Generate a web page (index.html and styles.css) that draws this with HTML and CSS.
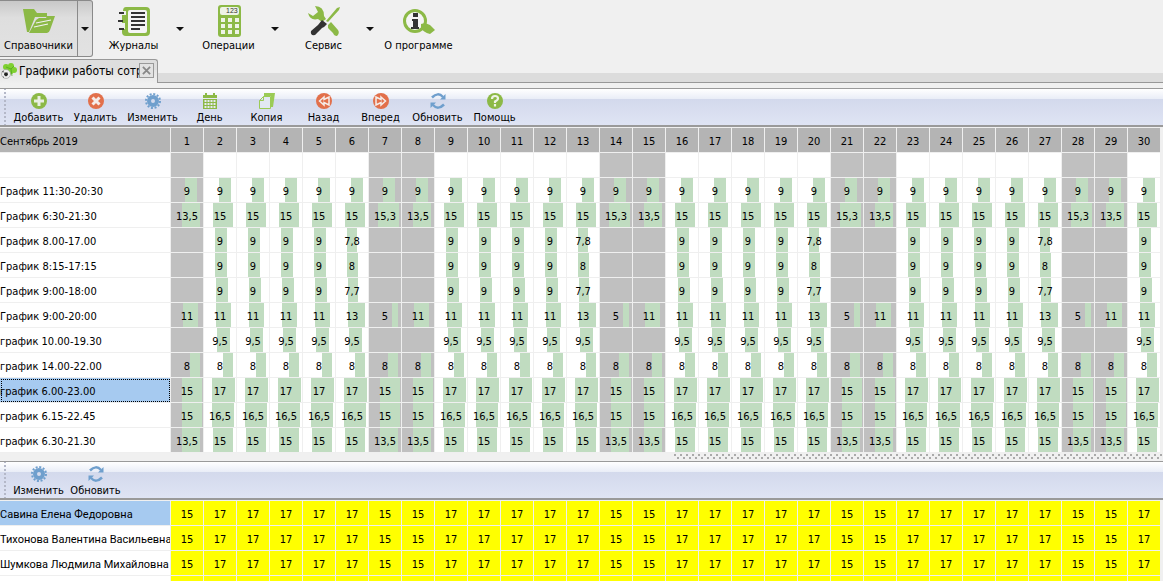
FILE: index.html
```html
<!DOCTYPE html>
<html lang="ru">
<head>
<meta charset="utf-8">
<title>Графики работы сотрудников</title>
<link rel="stylesheet" href="styles.css">
</head>
<body>
<svg class="sprite" aria-hidden="true">
  <symbol id="i-folder" viewBox="0 0 32 32"><path fill="#8cb946" d="M0 4h11l3 4h10v4H12L6 27H4z"/><path fill="#8cb946" d="M13 15l3-2h7l1-2h8l-5 14q-1 3-3 3H6z"/><path d="M13 18l15-3M11 22l14-3" stroke="#f2f2f2" stroke-width="1.200" fill="none"/></symbol>
  <symbol id="i-journal" viewBox="0 0 32 32"><path fill="#8cb946" d="M8 2h20q4 0 4 4v21q0 4-4 4H8q-4 0-4-4v-3h3v-6H4v-8h4V6H5q0-4 3-4z"/><rect x="10" y="5" width="19" height="23" rx="2" fill="#f4f4f4"/><path d="M13 8h14M13 12h14M13 16h14M13 20h14M13 24h9M1 8h5M0 16h5M1 24h5" stroke="#333" stroke-width="2"/></symbol>
  <symbol id="i-calc" viewBox="0 0 32 32"><rect x="5" width="23" height="32" rx="3" fill="#8cb946"/><rect x="7" y="2" width="19" height="8" rx="2" fill="#eef3e6"/><text x="13" y="8" font-size="7" font-family="Liberation Sans,sans-serif" fill="#333">123</text><path stroke="#eef3e6" stroke-width="4" stroke-dasharray="4 3" d="M8 15h18M8 21h18M8 27h18"/></symbol>
  <symbol id="i-tools" viewBox="0 0 32 32"><path fill="#8cb946" d="M7 1q9 0 9 10l2 3-4 3-4-3Q2 16 0 8l5 3 5-4zM29 3l3-1-1 3-11 12-2-1zM20 20l3-3 7 8q2 3-1 6-3 0-4-3l-5-5z"/><path fill="#333" d="M14 15l5 4-3 3-2 1-7 7q-5 1-4-4l7-6z"/></symbol>
  <symbol id="i-info" viewBox="0 0 32 32"><circle cx="12" cy="16" r="10.500" fill="#f4f4f4" stroke="#8cb946" stroke-width="3"/><path fill="#8cb946" d="M18 19l4-1 5 2 5 5-5 4q-7-2-9-6z"/><path fill="#333" d="M10 8h5v4h-5zM9 14h6v8h1v2H8v-2h2v-6H9z"/></symbol>
  <symbol id="i-add" viewBox="0 0 16 16"><circle cx="8" cy="8" r="8" fill="#8cb946"/><path d="M8 3v10M3 8h10" stroke="#e9efe2" stroke-width="3"/></symbol>
  <symbol id="i-del" viewBox="0 0 16 16"><circle cx="8" cy="8" r="8" fill="#e2704b"/><path d="M4.500 4.500l7 7M11.500 4.500l-7 7" stroke="#f5ece9" stroke-width="3"/></symbol>
  <symbol id="i-gear" viewBox="0 0 16 16"><circle cx="8" cy="8" r="7" fill="none" stroke="#6f9fcd" stroke-width="2" stroke-dasharray="2 1.670"/><circle cx="8" cy="8" r="4" fill="none" stroke="#6f9fcd" stroke-width="4"/></symbol>
  <symbol id="i-day" viewBox="0 0 16 16"><path fill="#8cb946" d="M1 2h14v14H1zM3 0h2v3H3zM11 0h2v3h-2z"/><path d="M1 5.500h14" stroke="#e6eaf2"/><path d="M2.500 8h11M2.500 11h11M2.500 14h11" stroke="#e6eaf2" stroke-width="2" stroke-dasharray="2 1"/></symbol>
  <symbol id="i-copy" viewBox="0 0 16 16"><path fill="#9bcb55" d="M5 0h11l-2 14h-2V3H5z"/><path fill="#e2e8f3" stroke="#9bcb55" d="M4.500 3.500h7v12h-11v-8zM.500 7.500h4v-4"/></symbol>
  <symbol id="i-back" viewBox="0 0 16 16"><circle cx="8" cy="8" r="8" fill="#e2704b"/><path d="M8 4L3.500 8 8 12V9.500l5 2.500V4L8 6.500z" fill="none" stroke="#f5ece9" stroke-width="1.500"/></symbol>
  <symbol id="i-fwd" viewBox="0 0 16 16"><circle cx="8" cy="8" r="8" fill="#e2704b"/><path d="M8 4l4.500 4L8 12V9.500L3 12V4l5 2.500z" fill="none" stroke="#f5ece9" stroke-width="1.500"/></symbol>
  <symbol id="i-refresh" viewBox="0 0 16 16"><path d="M2 4.500Q8-1.500 13 4M14 11.500Q8 17.500 3 12" fill="none" stroke="#6f9fcd" stroke-width="2.500"/><path fill="#6f9fcd" d="M15.500 1v5.500H10zM.500 15V9.500H6z"/></symbol>
  <symbol id="i-help" viewBox="0 0 16 16"><circle cx="8" cy="8" r="8" fill="#8cb946"/><path d="M5 6q0-3 3-3t3 2.500Q11 7 8 8.500V10M8 11v2.500" fill="none" stroke="#eef3e6" stroke-width="2.200"/></symbol>
  <symbol id="i-clover" viewBox="0 0 16 16"><g fill="#7fd030"><circle cx="5" cy="4" r="3"/><circle cx="10" cy="3" r="3"/><circle cx="13" cy="7" r="3"/><circle cx="9" cy="8" r="3.500"/></g><path d="M5 4l5 2 3-3M10 6l1 7" stroke="#4da31b" stroke-width=".7" fill="none"/><circle cx="5" cy="11" r="4.500" fill="#eee" stroke="#888" stroke-width=".5"/><path fill="#222" d="M3.500 9.500h3l.5 2.500-2 1.500-2-1.500zM1 9l1.500-1.500v2zM7 7l1.500 2zM1.500 13l1.500 1v1zM7 14.500l1.500-2z"/></symbol>
</svg>

<header class="ribbon">
  <div class="group pressed"><button class="main"><svg class="ico"><use href="#i-folder"/></svg>Справочники</button><button class="drop" aria-label="Меню: Справочники"></button></div>
  <div class="group"><button class="main"><svg class="ico"><use href="#i-journal"/></svg>Журналы</button><button class="drop" aria-label="Меню: Журналы"></button></div>
  <div class="group"><button class="main"><svg class="ico"><use href="#i-calc"/></svg>Операции</button><button class="drop" aria-label="Меню: Операции"></button></div>
  <div class="group"><button class="main"><svg class="ico"><use href="#i-tools"/></svg>Сервис</button><button class="drop" aria-label="Меню: Сервис"></button></div>
  <div class="group"><button class="main"><svg class="ico"><use href="#i-info"/></svg>О программе</button></div>
</header>

<nav class="tabs">
  <div class="tab"><svg class="tab-ico"><use href="#i-clover"/></svg><span class="tab-name">Графики работы сотрудников</span><button class="close" aria-label="Закрыть"><svg viewBox="0 0 10 10"><path d="M1 1l8 8M9 1L1 9"/></svg></button></div>
</nav>

<div class="toolbar">
  <button><svg><use href="#i-add"/></svg>Добавить</button>
  <button><svg><use href="#i-del"/></svg>Удалить</button>
  <button><svg><use href="#i-gear"/></svg>Изменить</button>
  <button><svg><use href="#i-day"/></svg>День</button>
  <button><svg><use href="#i-copy"/></svg>Копия</button>
  <button><svg><use href="#i-back"/></svg>Назад</button>
  <button><svg><use href="#i-fwd"/></svg>Вперед</button>
  <button><svg><use href="#i-refresh"/></svg>Обновить</button>
  <button><svg><use href="#i-help"/></svg>Помощь</button>
</div>
<table class="grid" id="schedules"></table>
<div class="splitter"></div>
<div class="toolbar">
  <button><svg><use href="#i-gear"/></svg>Изменить</button>
  <button><svg><use href="#i-refresh"/></svg>Обновить</button>
</div>
<table class="grid people" id="people"></table>
<script src="app.js"></script>
</body>
</html>
```
FILE: styles.css
```css
* { box-sizing: border-box; }

body {
  margin: 0;
  height: 100vh;
  overflow: hidden;
  background: #f0f0f0;
  color: #000;
  font: 11px/14px Tahoma, "DejaVu Sans Condensed", "DejaVu Sans", sans-serif;
}

button {
  margin: 0;
  padding: 0;
  border: 0;
  background: none;
  color: inherit;
  font: inherit;
  white-space: nowrap;
}

.sprite { display: none; }

.ribbon {
  display: flex;
  gap: 2px;
  height: 59px;
}

.group {
  display: flex;
  width: 93px;
  height: 57px;
}

.main {
  display: flex;
  flex-direction: column;
  align-items: center;
  gap: 2px;
  width: 77px;
  padding-top: 5px;
}

.ico { flex: none; width: 32px; height: 32px; }

.drop {
  display: flex;
  align-items: center;
  justify-content: center;
  flex: 1;
}

.drop::before {
  content: "";
  border: 4px solid transparent;
  border-top-color: #111;
  border-bottom: 0;
}

.pressed {
  border: 1px solid #8a8a8a;
  border-left: 0;
  border-radius: 0 3px 3px 0;
  background: linear-gradient(#c8c8c8, #dedede 30%, #e2e2e2);
}

.pressed .main { padding-top: 4px; }
.pressed .drop { border-left: 1px solid #8a8a8a; }

.tabs {
  display: flex;
  height: 24px;
  border-bottom: 1px solid #989898;
  background: linear-gradient(#f0f0f0 14px, #dcdcdc 14px);
}

.tab {
  display: flex;
  align-items: center;
  width: 158px;
  height: 24px;
  padding: 0 3px 2px 1px;
  border: 1px solid #989898;
  border-width: 1px 1px 0 0;
  border-radius: 0 3px 0 0;
  background: linear-gradient(#dedede 10px, #e4e4e4 10px, #efefef);
}

.tab-ico { flex: none; width: 16px; height: 16px; }

.tab-name {
  flex: 1;
  overflow: hidden;
  margin-left: 2px;
  font-size: 12px;
  white-space: nowrap;
}

.close {
  flex: none;
  width: 15px;
  height: 15px;
  border: 1px solid #999;
  background: #e2e2e2;
}

.close svg { display: block; width: 9px; height: 9px; margin: 2px; stroke: #888; stroke-width: 2; }

.toolbar {
  display: flex;
  height: 39px;
  padding-left: 10px;
  border: 1px solid #9a9a9a;
  border-width: 1px 0 2px;
  background:
    radial-gradient(circle, #b4b8c8 1px, transparent 1px) 3px 2px / 4px 4px repeat-y,
    linear-gradient(#fff, #e9edf7 10px, #d3d9ec 10px, #dfe4f4);
}

.tabs + .toolbar { margin-top: 5px; }

.toolbar button {
  display: flex;
  flex-direction: column;
  align-items: center;
  gap: 2px;
  width: 57px;
  padding-top: 4px;
}

.toolbar svg { flex: none; width: 16px; height: 16px; }

.grid {
  table-layout: fixed;
  width: 1161px;
  margin-top: 1px;
  border-collapse: separate;
  border-spacing: 0;
  background: #fff;
}

.grid th,
.grid td {
  height: 25px;
  padding: 3px 0 0;
  overflow: hidden;
  border: 1px solid #efefef;
  border-width: 0 1px 1px 0;
  font-weight: normal;
  text-align: center;
  white-space: nowrap;
}

.grid col.days { width: 33px; }
.grid thead th { background: #b4b4b4; }
.grid th:first-child { text-align: left; }
.grid .off { background-color: #c0c0c0; }

/* Shift bar: --from and --len are its start and length inside the day */
.grid .bar {
  background-image: linear-gradient(#c0dcc0, #c0dcc0);
  background-position: calc(var(--from) * 1px) 0;
  background-size: calc(var(--len) * 1px) 100%;
  background-repeat: no-repeat;
}

.grid tbody .selected { background: #a6caf0; }
.grid .focused { outline: 1px dotted #000; outline-offset: -2px; }
.people th { font-family: Tahoma, Roboto, sans-serif; }
.people td { background: #ff0; }

/* Two staggered rows of 2px dots */
.splitter {
  height: 8px;
  margin-left: 674px;
  background:
    linear-gradient(90deg, #aaa 2px, transparent 2px) 0 1px / 6px 2px repeat-x,
    linear-gradient(90deg, #aaa 2px, transparent 2px) 3px 4px / 6px 2px repeat-x;
}
```
FILE: app.js
```js
const DAYS = 30;
const isOff = d => d % 7 === 0 || d % 7 === 1;

// Cells are [hours, bar start, bar length]; keys: work day, Friday, Saturday, Sunday
const schedules = [
  { name: '' },
  { name: 'График 11:30-20:30', work: ['9', 15, 12], sat: ['9', 14, 12], sun: ['9', 14, 12] },
  { name: 'График 6:30-21:30', work: ['15', 9, 20], sat: ['15,3', 9, 21], sun: ['13,5', 11, 18] },
  { name: 'График 8.00-17.00', work: ['9', 11, 12], fri: ['7,8', 11, 10] },
  { name: 'График 8:15-17:15', work: ['9', 11, 12], fri: ['8', 11, 11] },
  { name: 'График 9:00-18:00', work: ['9', 12, 12], fri: ['7,7', 12, 10] },
  { name: 'График 9:00-20:00', work: ['11', 12, 15], fri: ['13', 12, 17], sat: ['5', 23, 6], sun: ['11', 12, 15] },
  { name: 'график 10.00-19.30', work: ['9,5', 13, 13] },
  { name: 'график 14.00-22.00', work: ['8', 19, 10], sat: ['8', 19, 10], sun: ['8', 19, 10] },
  { name: 'график 6.00-23.00', work: ['17', 8, 23], sat: ['15', 11, 20], sun: ['15', 11, 20], selected: true },
  { name: 'график 6.15-22.45', work: ['16,5', 8, 22], sat: ['15', 11, 20], sun: ['15', 11, 20] },
  { name: 'график 6.30-21.30', work: ['15', 9, 20], sat: ['13,5', 11, 18], sun: ['13,5', 11, 18] }
];
const people = ['Савина Елена Федоровна', 'Тихонова Валентина Васильевна', 'Шумкова Людмила Михайловна', ''];

const cols = '<colgroup><col>' + '<col class="days">'.repeat(DAYS) + '</colgroup>';
const days = fn => Array.from({ length: DAYS }, (_, i) => fn(i + 1)).join('');

function cellFor(row, d) {
  if (d % 7 === 0) return row.sat;
  if (d % 7 === 1) return row.sun;
  return (d % 7 === 6 && row.fri) || row.work;
}

document.getElementById('schedules').innerHTML = cols +
  '<thead><tr><th>Сентябрь 2019</th>' + days(d => `<th>${d}</th>`) + '</tr></thead><tbody>' +
  schedules.map(row => `<tr><th class="${row.selected ? 'selected focused' : ''}">${row.name}</th>` +
    days(d => {
      const c = cellFor(row, d);
      const off = isOff(d) ? 'off' : '';
      return c
        ? `<td class="bar ${off}" style="--from:${c[1]};--len:${c[2]}">${c[0]}</td>`
        : `<td class="${off}"></td>`;
    }) + '</tr>').join('') + '</tbody>';

document.getElementById('people').innerHTML = cols + '<tbody>' +
  people.map((name, i) => `<tr><th class="${i === 0 ? 'selected' : ''}">${name}</th>` +
    days(d => `<td>${name ? (isOff(d) ? 15 : 17) : ''}</td>`) + '</tr>').join('') + '</tbody>';
```
